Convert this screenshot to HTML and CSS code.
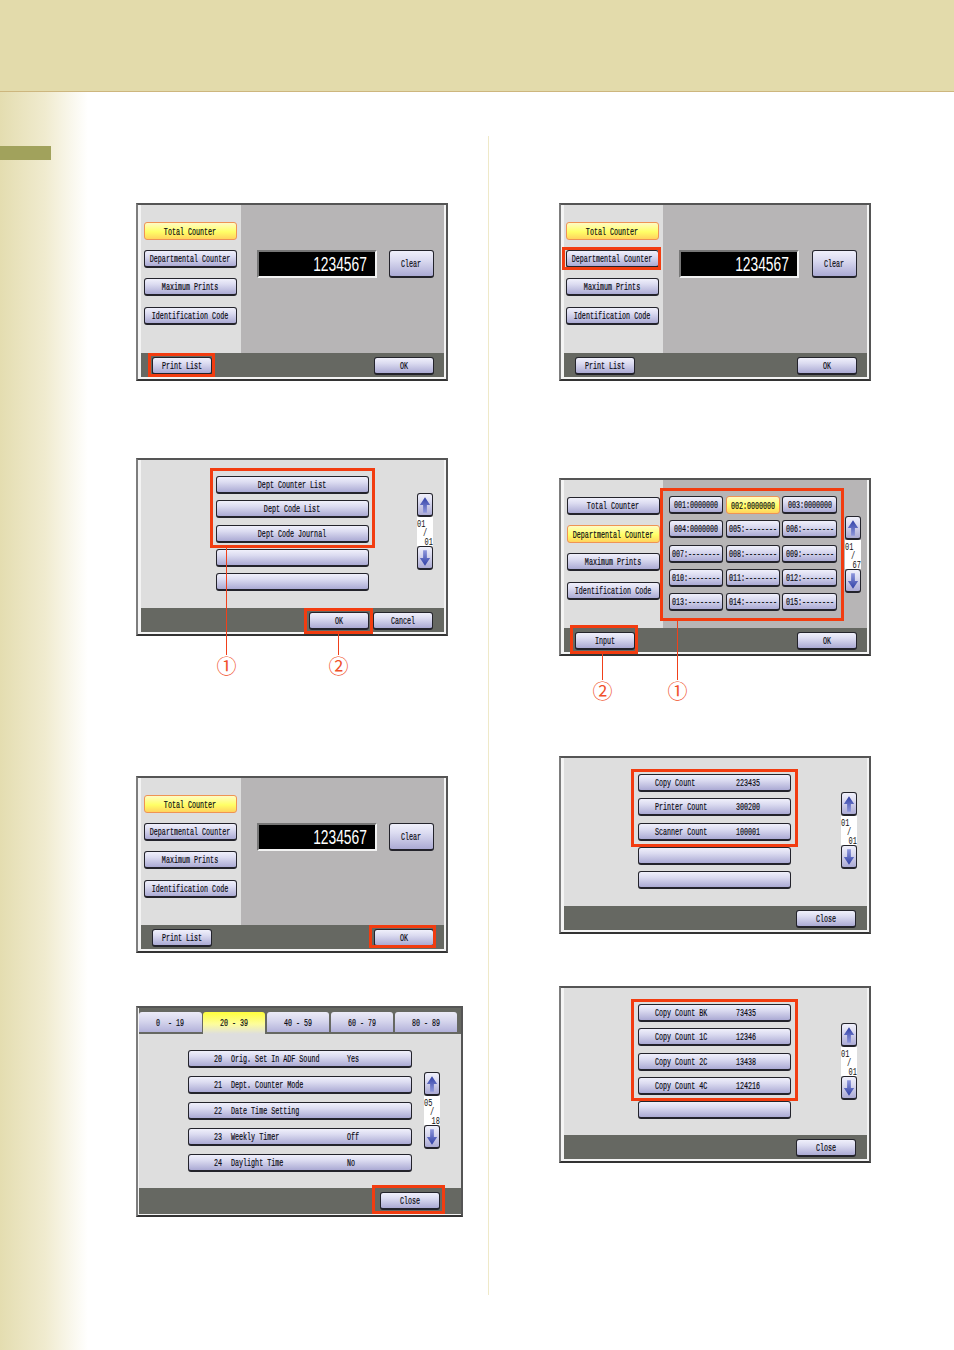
FILE: index.html
```html
<!DOCTYPE html>
<html lang="en">
<head>
    <meta charset="UTF-8">
    <meta name="viewport" content="width=device-width, initial-scale=1.0">
    <title>Counter screens</title>
    <link rel="stylesheet" href="styles.css">
</head>
<body>

    <svg class="icon-defs" width="0" height="0">
        <defs>
            <linearGradient id="arrow-fill" x1="0" y1="0" x2="0" y2="1">
                <stop offset="0" stop-color="#2f3fa6"/>
                <stop offset="1" stop-color="#8f97dc"/>
            </linearGradient>
            <linearGradient id="arrow-fill-down" x1="0" y1="0" x2="0" y2="1">
                <stop offset="0" stop-color="#8f97dc"/>
                <stop offset="1" stop-color="#2f3fa6"/>
            </linearGradient>
            <symbol id="arrow-up" viewBox="0 0 14 20">
                <path d="M7 1 L13 10 H9.2 V19 H4.8 V10 H1 Z" fill="url(#arrow-fill)"/>
            </symbol>
            <symbol id="arrow-down" viewBox="0 0 14 20">
                <path d="M7 19 L13 10 H9.2 V1 H4.8 V10 H1 Z" fill="url(#arrow-fill-down)"/>
            </symbol>
        </defs>
    </svg>

    <header class="top-band"></header>

    <div class="page">
        <div class="rail"><div class="rail-tab"></div></div>

        <div class="col col-left">

            <!-- print list, step 1 -->
            <div class="screen">
                <div class="body">
                    <div class="side">
                        <button class="btn active"><span class="t">Total Counter</span></button>
                        <button class="btn"><span class="t">Departmental Counter</span></button>
                        <button class="btn"><span class="t">Maximum Prints</span></button>
                        <button class="btn"><span class="t">Identification Code</span></button>
                    </div>
                    <div class="pane">
                        <div class="display"><span>1234567</span></div>
                        <button class="btn clear"><span class="t">Clear</span></button>
                    </div>
                </div>
                <div class="foot">
                    <button class="btn wide mark"><span class="t">Print List</span></button>
                    <button class="btn wide"><span class="t">OK</span></button>
                </div>
            </div>

            <!-- print list, step 2 -->
            <div class="screen gap-77">
                <div class="body list-body list-b">
                    <div class="rows rows-b">
                        <div class="group mark-b">
                            <button class="btn"><span class="t">Dept Counter List</span></button>
                            <button class="btn"><span class="t">Dept Code List</span></button>
                            <button class="btn"><span class="t">Dept Code Journal</span></button>
                        </div>
                        <button class="btn"></button>
                        <button class="btn"></button>
                    </div>
                    <div class="scroller scroller-b">
                        <button class="btn arrow"><svg width="12" height="18"><use href="#arrow-up"/></svg></button>
                        <div class="pager"><span>01</span><span class="mid">/</span><span class="end">01</span></div>
                        <button class="btn arrow"><svg width="12" height="18"><use href="#arrow-down"/></svg></button>
                    </div>
                </div>
                <div class="foot foot-end">
                    <button class="btn wide mark mark-okb"><span class="t">OK</span></button>
                    <button class="btn wide"><span class="t">Cancel</span></button>
                </div>
                <div class="callout call-b1"><span>①</span></div>
                <div class="callout call-b2"><span>②</span></div>
            </div>

            <!-- print list, step 3 -->
            <div class="screen gap-140 short">
                <div class="body">
                    <div class="side">
                        <button class="btn active"><span class="t">Total Counter</span></button>
                        <button class="btn"><span class="t">Departmental Counter</span></button>
                        <button class="btn"><span class="t">Maximum Prints</span></button>
                        <button class="btn"><span class="t">Identification Code</span></button>
                    </div>
                    <div class="pane">
                        <div class="display"><span>1234567</span></div>
                        <button class="btn clear"><span class="t">Clear</span></button>
                    </div>
                </div>
                <div class="foot">
                    <button class="btn wide"><span class="t">Print List</span></button>
                    <button class="btn wide mark mark-ok"><span class="t">OK</span></button>
                </div>
            </div>

            <!-- function parameter list -->
            <div class="screen screen-tabs gap-53">
                <div class="tabs">
                    <div class="tab first"><span class="t">0  - 19</span></div>
                    <div class="tab current"><span class="t">20 - 39</span></div>
                    <div class="tab"><span class="t">40 - 59</span></div>
                    <div class="tab"><span class="t">60 - 79</span></div>
                    <div class="tab"><span class="t">80 - 89</span></div>
                </div>
                <div class="body list-body list-d">
                    <div class="rows rows-d">
                        <button class="btn row"><span class="t num">20</span><span class="t label">Orig. Set In ADF Sound</span><span class="t">Yes</span></button>
                        <button class="btn row"><span class="t num">21</span><span class="t label">Dept. Counter Mode</span></button>
                        <button class="btn row"><span class="t num">22</span><span class="t label">Date Time Setting</span></button>
                        <button class="btn row"><span class="t num">23</span><span class="t label">Weekly Timer</span><span class="t">Off</span></button>
                        <button class="btn row"><span class="t num">24</span><span class="t label">Daylight Time</span><span class="t">No</span></button>
                    </div>
                    <div class="scroller scroller-d">
                        <button class="btn arrow"><svg width="12" height="18"><use href="#arrow-up"/></svg></button>
                        <div class="pager"><span>05</span><span class="mid">/</span><span class="end">18</span></div>
                        <button class="btn arrow"><svg width="12" height="18"><use href="#arrow-down"/></svg></button>
                    </div>
                </div>
                <div class="foot foot-end foot-tall">
                    <button class="btn wide mark mark-close"><span class="t">Close</span></button>
                </div>
            </div>
        </div>

        <div class="col col-right">

            <!-- departmental counter, step 1 -->
            <div class="screen">
                <div class="body">
                    <div class="side side-a">
                        <button class="btn active"><span class="t">Total Counter</span></button>
                        <button class="btn mark mark-dept"><span class="t">Departmental Counter</span></button>
                        <button class="btn"><span class="t">Maximum Prints</span></button>
                        <button class="btn"><span class="t">Identification Code</span></button>
                    </div>
                    <div class="pane pane-a">
                        <div class="display"><span>1234567</span></div>
                        <button class="btn clear"><span class="t">Clear</span></button>
                    </div>
                </div>
                <div class="foot">
                    <button class="btn wide"><span class="t">Print List</span></button>
                    <button class="btn wide"><span class="t">OK</span></button>
                </div>
            </div>

            <!-- departmental counter, step 2 -->
            <div class="screen gap-97">
                <div class="body">
                    <div class="side side-e">
                        <button class="btn"><span class="t">Total Counter</span></button>
                        <button class="btn active"><span class="t">Departmental Counter</span></button>
                        <button class="btn"><span class="t">Maximum Prints</span></button>
                        <button class="btn"><span class="t">Identification Code</span></button>
                    </div>
                    <div class="pane pane-grid">
                        <div class="codes mark-e">
                            <button class="btn"><span class="t">001:0000000</span></button>
                            <button class="btn active"><span class="t">002:0000000</span></button>
                            <button class="btn"><span class="t">003:0000000</span></button>
                            <button class="btn"><span class="t">004:0000000</span></button>
                            <button class="btn"><span class="t">005:--------</span></button>
                            <button class="btn"><span class="t">006:--------</span></button>
                            <button class="btn"><span class="t">007:--------</span></button>
                            <button class="btn"><span class="t">008:--------</span></button>
                            <button class="btn"><span class="t">009:--------</span></button>
                            <button class="btn"><span class="t">010:--------</span></button>
                            <button class="btn"><span class="t">011:--------</span></button>
                            <button class="btn"><span class="t">012:--------</span></button>
                            <button class="btn"><span class="t">013:--------</span></button>
                            <button class="btn"><span class="t">014:--------</span></button>
                            <button class="btn"><span class="t">015:--------</span></button>
                        </div>
                        <div class="scroller scroller-e">
                            <button class="btn arrow"><svg width="12" height="18"><use href="#arrow-up"/></svg></button>
                            <div class="pager"><span>01</span><span class="mid">/</span><span class="end">67</span></div>
                            <button class="btn arrow"><svg width="12" height="18"><use href="#arrow-down"/></svg></button>
                        </div>
                    </div>
                </div>
                <div class="foot">
                    <button class="btn wide mark mark-input"><span class="t">Input</span></button>
                    <button class="btn wide"><span class="t">OK</span></button>
                </div>
                <div class="callout call-e1"><span>①</span></div>
                <div class="callout call-e2"><span>②</span></div>
            </div>

            <!-- counter values -->
            <div class="screen gap-100">
                <div class="body list-body list-f">
                    <div class="rows rows-f">
                        <div class="group mark-f">
                            <button class="btn row"><span class="t name">Copy Count</span><span class="t">223435</span></button>
                            <button class="btn row"><span class="t name">Printer Count</span><span class="t">300200</span></button>
                            <button class="btn row"><span class="t name">Scanner Count</span><span class="t">100001</span></button>
                        </div>
                        <button class="btn"></button>
                        <button class="btn"></button>
                    </div>
                    <div class="scroller scroller-f">
                        <button class="btn arrow"><svg width="12" height="18"><use href="#arrow-up"/></svg></button>
                        <div class="pager"><span>01</span><span class="mid">/</span><span class="end">01</span></div>
                        <button class="btn arrow"><svg width="12" height="18"><use href="#arrow-down"/></svg></button>
                    </div>
                </div>
                <div class="foot foot-end">
                    <button class="btn wide"><span class="t">Close</span></button>
                </div>
            </div>

            <!-- colour counter values -->
            <div class="screen gap-52 short">
                <div class="body list-body list-f">
                    <div class="rows rows-f">
                        <div class="group mark-f">
                            <button class="btn row"><span class="t name">Copy Count BK</span><span class="t">73435</span></button>
                            <button class="btn row"><span class="t name">Copy Count 1C</span><span class="t">12346</span></button>
                            <button class="btn row"><span class="t name">Copy Count 2C</span><span class="t">13438</span></button>
                            <button class="btn row"><span class="t name">Copy Count 4C</span><span class="t">124216</span></button>
                        </div>
                        <button class="btn"></button>
                    </div>
                    <div class="scroller scroller-g">
                        <button class="btn arrow"><svg width="12" height="18"><use href="#arrow-up"/></svg></button>
                        <div class="pager"><span>01</span><span class="mid">/</span><span class="end">01</span></div>
                        <button class="btn arrow"><svg width="12" height="18"><use href="#arrow-down"/></svg></button>
                    </div>
                </div>
                <div class="foot foot-end">
                    <button class="btn wide"><span class="t">Close</span></button>
                </div>
            </div>
        </div>
    </div>

</body>
</html>
```

FILE: styles.css
```css
* {
    box-sizing: border-box;
}
html, body {
    margin: 0;
    padding: 0;
}
body {
    width: 954px;
    height: 1350px;
    overflow: hidden;
    font-family: "Liberation Mono", monospace;
    background: linear-gradient(90deg, #e4ddb0 0, #f0ebcf 45px, #fff 88px);
}
.icon-defs {
    position: absolute;
}
.top-band {
    height: 92px;
    background-color: #e3dbab;
    border-bottom: 1px solid #cdb67e;
}

/* page columns */
.page {
    display: flex;
    margin-top: 44px;
    height: 1159px;
}
.rail {
    width: 136px;
    padding-top: 10px;
}
.rail-tab {
    width: 51px;
    height: 14px;
    background-color: #a1a25c;
}
.col {
    padding-top: 67px;
}
.col-left {
    width: 352px;
}
.col-right {
    border-left: 1px solid #efe9c8;
    padding-left: 70px;
}
.gap-52 { margin-top: 52px; }
.gap-53 { margin-top: 53px; }
.gap-77 { margin-top: 77px; }
.gap-97 { margin-top: 97px; }
.gap-100 { margin-top: 100px; }
.gap-140 { margin-top: 140px; }

/* device screen */
.screen {
    position: relative;
    display: flex;
    flex-direction: column;
    width: 312px;
    height: 178px;
    padding: 0 2px 2px 3px;
    background-color: #f4f4f4;
    border: 2px solid #555;
    border-left-color: #7d7d7d;
    border-right-color: #555;
    border-bottom-color: #333;
}
.screen.short {
    height: 177px;
}
.screen-tabs {
    width: 327px;
    height: 211px;
    padding: 0 0 1px 1px;
}
.body {
    display: flex;
    flex: 1;
    min-height: 0;
}
.side {
    display: flex;
    flex-direction: column;
    gap: 10.2px;
    width: 100px;
    padding: 17px 0 0 3px;
    background-color: #dedede;
}
.side .btn {
    width: 93px;
}
.side-a {
    width: 99px;
    padding-left: 2px;
}
.side-e {
    width: 99px;
}
.pane {
    flex: 1;
    display: flex;
    align-items: flex-start;
    gap: 12px;
    padding: 45px 0 0 16px;
    background-color: #b7b5b6;
}
.pane-a {
    gap: 13px;
}
.pane-grid {
    gap: 8px;
    padding: 16px 0 0 6px;
}
.display {
    width: 120px;
    height: 28px;
    padding-right: 8px;
    text-align: right;
    color: white;
    background-color: #000;
    border: 2px solid #777;
    border-right-color: #f2f2f2;
    border-bottom-color: #f2f2f2;
    font-family: "Liberation Sans", sans-serif;
    font-size: 20px;
    line-height: 24px;
}
.display span {
    display: inline-block;
    transform: scaleX(.69);
    transform-origin: right center;
}
.foot {
    display: flex;
    justify-content: space-between;
    height: 24px;
    padding: 4px 10px 0 11px;
    background-color: #666862;
}
.foot-end {
    justify-content: flex-end;
    gap: 4px;
    padding-right: 11px;
}
.foot-tall {
    height: 26px;
    padding-right: 21px;
}

/* narrow label text, the panel font is about 4px per character */
.t {
    display: inline-block;
    flex-shrink: 0;
    color: #0c0c14;
    font-family: "Liberation Mono", monospace;
    font-size: 10px;
    line-height: 12px;
    white-space: pre;
    -webkit-text-stroke: .2px #0c0c14;
    transform: scaleX(.67);
}

/* buttons */
.btn {
    position: relative;
    display: flex;
    align-items: center;
    justify-content: center;
    width: 100%;
    height: 18px;
    margin: 0;
    padding: 3px 0 0;
    background: linear-gradient(#f0f0fb, #dcdcf1 35%, #abaad4);
    border: 1px solid #23232b;
    border-bottom-width: 2px;
    border-radius: 3px;
}
.btn.active {
    background: linear-gradient(#fffbc4, #ffff66 55%, #ffd35e);
    border: 1px solid #ef9354;
}
.clear {
    width: 45px;
    height: 28px;
}
.wide {
    width: 60px;
}
.row {
    justify-content: flex-start;
    text-align: left;
}
.row .t {
    transform-origin: left center;
}
.num {
    width: 17px;
}
.label {
    width: 116px;
}
.name {
    width: 81px;
}

/* red highlight frames */
.mark::after,
.group::after,
.codes::after {
    content: "";
    position: absolute;
    inset: -5px -4px -4px -5px;
    border: 3px solid #f23c10;
    pointer-events: none;
}
.mark-okb::after { inset: -5px -5px -6px -6px; }
.mark-ok::after { inset: -5px -3px -3px -6px; }
.mark-close::after { inset: -8px -6px -6px -9px; }
.mark-dept::after { inset: -4px -3px -4px -5px; }
.mark-input::after { inset: -8px -4px -6px -6px; }
.mark-b::after { inset: -8px -6px -5px; }
.mark-e::after { inset: -8px -7px -10px -9px; }
.mark-f::after { inset: -5px -7px -6px; }

/* list screens */
.list-body {
    background-color: #dedede;
}
.list-b { padding-left: 75px; }
.list-d { padding-left: 49px; }
.list-f { padding-left: 74px; }
.rows {
    display: flex;
    flex-direction: column;
    gap: 6.3px;
    margin-top: 16px;
}
.rows-b {
    width: 153px;
}
.rows-d {
    width: 224px;
    gap: 8px;
}
.rows-f {
    width: 153px;
}
.rows-d .row { padding-left: 25px; }
.rows-f .row { padding-left: 16px; }
.group {
    position: relative;
    display: flex;
    flex-direction: column;
    gap: 6.3px;
}
.codes {
    position: relative;
    display: grid;
    grid-template-columns: 54px 54px 55px;
    grid-auto-rows: 18px;
    gap: 6.3px 2.5px;
    width: 168px;
}

/* up / down pager */
.scroller {
    width: 16px;
}
.scroller-b { margin: 33px 0 0 48px; }
.scroller-d { margin: 38px 0 0 12px; }
.scroller-e { margin-top: 20px; }
.scroller-f { margin: 34px 0 0 50px; }
.scroller-g { margin: 35px 0 0 50px; }
.arrow {
    height: 24px;
    padding: 0;
}
.arrow svg {
    display: block;
    flex-shrink: 0;
}
.pager {
    display: flex;
    flex-direction: column;
    height: 29px;
    padding-top: 3px;
    background-color: #fff;
    font-size: 10px;
    line-height: 9px;
    color: #111;
}
.pager span {
    transform: scaleX(.7);
    transform-origin: left center;
}
.pager .mid {
    text-align: center;
    transform-origin: center;
}
.pager .end {
    text-align: right;
    transform-origin: right center;
}

/* tab row */
.tabs {
    display: flex;
    gap: 2px;
    height: 26px;
    padding-top: 4px;
    background-color: #666862;
}
.tab {
    display: flex;
    align-items: center;
    justify-content: center;
    width: 62px;
    height: 20px;
    padding-top: 3px;
    background: linear-gradient(#ecebf8, #d6d6ed 45%, #b3b2da);
    border-radius: 3px 3px 0 0;
}
.tab.first {
    width: 63px;
    margin-right: -1px;
}
.tab.current {
    height: 22px;
    padding-bottom: 2px;
    background: linear-gradient(#ffff3c, #fdfd9c 55%, #dedede);
}

/* numbered callouts */
.callout {
    position: absolute;
    width: 1px;
    background-color: #f0401a;
}
.callout span {
    position: absolute;
    top: 100%;
    left: -13px;
    width: 27px;
    text-align: center;
    color: #f0502a;
    font-family: "Noto Sans CJK JP", sans-serif;
    font-size: 20px;
    line-height: 22px;
}
.call-b1 { left: 88px; top: 88px; height: 107px; }
.call-b2 { left: 200px; top: 174px; height: 21px; }
.call-e1 { left: 116px; top: 141px; height: 59px; }
.call-e2 { left: 41px; top: 174px; height: 26px; }
```
